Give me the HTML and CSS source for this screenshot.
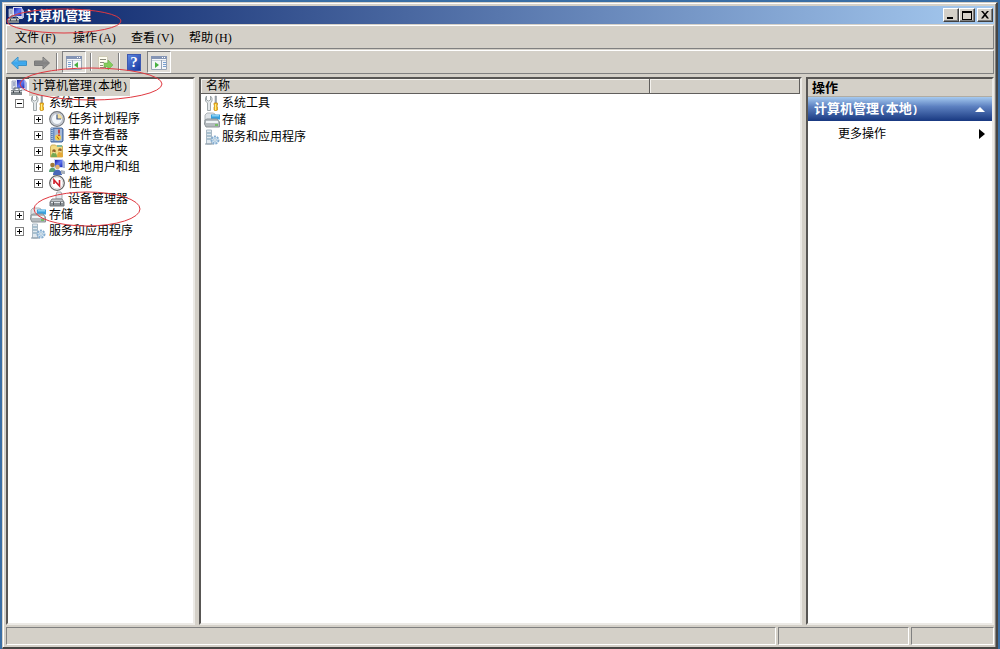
FILE: index.html
```html
<!DOCTYPE html>
<html lang="zh-CN">
<head>
<meta charset="utf-8">
<title>计算机管理</title>
<link rel="stylesheet" href="styles.css">
</head>
<body>
<svg class="defs" width="0" height="0" aria-hidden="true">
  <defs>
    <linearGradient id="g-blue" x1="0" y1="0" x2="0" y2="1"><stop offset="0" stop-color="#8cd4fa"/><stop offset="0.5" stop-color="#38a4ec"/><stop offset="1" stop-color="#60c0f4"/></linearGradient>
    <linearGradient id="g-gray" x1="0" y1="0" x2="0" y2="1"><stop offset="0" stop-color="#b0b0b0"/><stop offset="0.5" stop-color="#808080"/><stop offset="1" stop-color="#a0a0a0"/></linearGradient>
    <linearGradient id="g-screen" x1="0" y1="0" x2="1" y2="1"><stop offset="0" stop-color="#1018a0"/><stop offset="0.5" stop-color="#6078f0"/><stop offset="1" stop-color="#1828b8"/></linearGradient>
    <symbol id="i-computer" viewBox="0 0 16 16">
      <path d="M1 2h4v8H1z" fill="#d8dce8" stroke="#a0a8c0"/><path d="M2 4h2M2 6h2" stroke="#7080a8"/>
      <path d="M5 0h9v10H5z" fill="#d8dcf4"/><path d="M6 1h7.500v8H6z" fill="url(#g-screen)"/>
      <path d="M14 1l2 3v7h-2z" fill="#b0b8e0"/><path d="M10 10h4l1 2h-5z" fill="#d0d4e0"/>
      <path d="M0 11h11v5H0z" fill="#7c8488"/><path d="M3 11V9h5v2" fill="none" stroke="#606870"/>
      <path d="M0 12.500h11" stroke="#c8ccd0"/><path d="M2.500 12v2M8.500 12v2" stroke="#404850"/>
    </symbol>
    <symbol id="i-tools" viewBox="0 0 16 16">
      <path d="M2.500 1v4l2 1 2-1V1l1.500 2v3L6.500 8v7.500h-3V8L1.500 6V3z" fill="#e4e8ea" stroke="#8c9498" stroke-width=".8"/>
      <path d="M11 1h1.500v7H11z" fill="#a0a8b0" stroke="#808890" stroke-width=".5"/>
      <path d="M10 8h3.500v2l-.8 1 .8 1v3l-1 .7h-1.500l-1-.7v-3l.8-1-.8-1z" fill="#f8bc20" stroke="#c08818" stroke-width=".7"/><path d="M11.500 9v6" stroke="#fff080"/>
    </symbol>
    <symbol id="i-clock" viewBox="0 0 16 16">
      <circle cx="8" cy="8" r="7.300" fill="#d4d8de" stroke="#74787e" stroke-width="1.200"/><circle cx="8" cy="8" r="5.500" fill="#f4f8fc" stroke="#a0a8b4" stroke-width=".7"/>
      <path d="M8 8V2.700A5.300 5.300 0 0 1 13.300 8z" fill="#f4dfa0"/><path d="M8 3.500V8h4" fill="none" stroke="#405888" stroke-width="1.200"/>
    </symbol>
    <symbol id="i-event" viewBox="0 0 16 16">
      <path d="M2 1h11l1 1v12l-1 1H2z" fill="#6c90c4" stroke="#48689c"/><path d="M3 1v14" stroke="#b8d0e8" stroke-width="1.500" stroke-dasharray="1 1"/>
      <path d="M5.500 2H13v12H5.500z" fill="#a4b8d8"/><circle cx="9" cy="10.500" r="3" fill="#f4d050"/><path d="M8 9.500l2 3" stroke="#a06000"/>
      <path d="M10 2.500v4M10 7.500v1.500" stroke="#c82828" stroke-width="1.600"/>
    </symbol>
    <symbol id="i-share" viewBox="0 0 16 16">
      <path d="M1.500 4l1-2h4l1 1h6v11h-12z" fill="#f4dc84" stroke="#d0b058"/><path d="M8 2h5v2H8z" fill="#80b8a0"/>
      <circle cx="5" cy="8" r="1.800" fill="#906028"/><circle cx="11" cy="7" r="1.800" fill="#906028"/>
      <path d="M2 14c0-6 6-6 6 0z" fill="#74a854"/><path d="M8 14c0-7 6-7 6 0z" fill="#e4a838"/><path d="M4 9l2 1M10 8l2 1" stroke="#fff0c0"/>
    </symbol>
    <symbol id="i-users" viewBox="0 0 16 16">
      <path d="M5 0h9v9H5z" fill="#ccd4f0"/><path d="M6 1h7.500v7H6z" fill="url(#g-screen)"/><path d="M14 1l2 2v6h-2z" fill="#a8b4d8"/>
      <circle cx="3.500" cy="6" r="2.300" fill="#a07838"/><path d="M0 13c0-6 7-6 7 0z" fill="#58a078"/>
      <circle cx="8.500" cy="8" r="2.300" fill="#e0b070"/><path d="M4 16c0-7 9-7 9 0z" fill="#4868b8"/><path d="M12 11l4 1v3h-4z" fill="#a8b0b8"/>
    </symbol>
    <symbol id="i-perf" viewBox="0 0 16 16">
      <circle cx="8" cy="8" r="7.300" fill="#fff" stroke="#646464" stroke-width="1.300"/><circle cx="8" cy="8" r="5.800" fill="none" stroke="#d0d0d0" stroke-width=".7"/>
      <path d="M5 9V5l5.500 6V5" fill="none" stroke="#d01c28" stroke-width="1.600"/>
    </symbol>
    <symbol id="i-device" viewBox="0 0 16 16">
      <path d="M8 1h4l1 3v4H7V4z" fill="#e4e8ec" stroke="#a8acb0"/><path d="M3 8h10l2 3H1z" fill="#c4c8cc" stroke="#808488"/>
      <path d="M1 11h14v4H1z" fill="#8c9296" stroke="#70767a"/><path d="M2 11.500h12" stroke="#e0e4e8"/><path d="M4.500 11v3M11.500 11v3" stroke="#585c60"/>
    </symbol>
    <symbol id="i-storage" viewBox="0 0 16 16">
      <path d="M1 3l2-2h6l2 1v7H1z" fill="#e0e4e8" stroke="#b0b6ba"/><path d="M7 2.500h9v5H7z" fill="#38a0dc"/><path d="M8 3h7v1.500H8z" fill="#88d0f4"/>
      <path d="M1 8l2-1h10l2.500 3v5H2l-1.500-3z" fill="#b4babe" stroke="#8c9498"/><path d="M2 10h12" stroke="#f0f4f6" stroke-width="2"/><path d="M11 13h3" stroke="#60c048" stroke-width="1.500"/>
    </symbol>
    <symbol id="i-service" viewBox="0 0 16 16">
      <path d="M2.500 1h5v14h-5z" fill="#e0e8ee" stroke="#a8b8c4"/><path d="M3 4h4M3 7h4M3 10h4" stroke="#7098b0"/>
      <path d="M1 15h9" stroke="#8898a4"/><circle cx="11" cy="11" r="3.500" fill="#d4e6f2" stroke="#84acd0" stroke-width="2" stroke-dasharray="2 1"/><circle cx="11" cy="11" r="1.300" fill="#fff" stroke="#78a0c0" stroke-width=".6"/>
    </symbol>
    <symbol id="i-panel" viewBox="0 0 18 16">
      <path d="M1.500 1.500h15v13h-15z" fill="#f4f6f8" stroke="#98a4b4"/><path d="M1 1h16v3H1z" fill="#8494b4"/><path d="M12 2.500h4" stroke="#fff" stroke-dasharray="1 1"/>
      <path d="M2 5.500h14" stroke="#c8d0dc"/>
    </symbol>
    <symbol id="i-export" viewBox="0 0 16 16">
      <path d="M1.500 1.500h9v13h-9z" fill="#fffdf0" stroke="#d0ccb8"/><path d="M3 4.500h6M3 7.500h4M3 10.500h3M3 12.500h6" stroke="#8c8c7c"/>
      <path d="M7 8h4V5l5 5-5 5v-3H7z" fill="#84cc5c" stroke="#68b048" stroke-width=".6"/>
    </symbol>
  </defs>
</svg>

<div class="window">
  <header class="titlebar">
    <svg class="icon"><use href="#i-computer"/></svg>
    <h1 class="title">计算机管理</h1>
    <div class="controls">
      <button class="control" aria-label="最小化"><svg width="10" height="8"><path d="M1 6h6v2H1z"/></svg></button>
      <button class="control" aria-label="最大化"><svg width="10" height="9"><path d="M0 0h10v9H0zM1 2v6h8V2z" fill-rule="evenodd"/></svg></button>
      <button class="control control-close" aria-label="关闭"><svg width="8" height="8"><path d="M0 0h2l2 2.500L6 0h2L5 3.500 8 7.500H6L4 5 2 7.500H0l3-4z"/></svg></button>
    </div>
  </header>

  <nav class="menubar">
    <button class="menu">文件<span class="latin">(F)</span></button>
    <button class="menu">操作<span class="latin">(A)</span></button>
    <button class="menu">查看<span class="latin">(V)</span></button>
    <button class="menu">帮助<span class="latin">(H)</span></button>
  </nav>

  <div class="toolbar">
    <button class="tool" aria-label="后退"><svg class="icon arrow-back" viewBox="0 0 16 16"><path d="M.5 8L7 2v4h8.500v4.500H7V14z"/></svg></button>
    <button class="tool" aria-label="前进"><svg class="icon arrow-next" viewBox="0 0 16 16"><path d="M15.500 8L9 2v4H.5v4.500H9V14z"/></svg></button>
    <span class="separator"></span>
    <button class="tool pressed" aria-label="显示/隐藏控制台树"><svg width="18" height="16"><use href="#i-panel"/><path d="M7.500 5v9" stroke="#98a4b4"/><path d="M3 7.500h3M3 9.500h3M3 11.500h3" stroke="#78a0d0"/><path d="M13 7v6l-4-3z" fill="#48b040"/></svg></button>
    <span class="separator"></span>
    <button class="tool export" aria-label="导出列表"><svg class="icon"><use href="#i-export"/></svg></button>
    <span class="separator"></span>
    <button class="tool help" aria-label="帮助">?</button>
    <button class="tool pressed" aria-label="显示/隐藏操作窗格"><svg width="18" height="16"><use href="#i-panel"/><path d="M11.500 5v9" stroke="#98a4b4"/><path d="M13 7.500h3M13 9.500h3M13 11.500h3" stroke="#78a0d0"/><path d="M5 7v6l4-3z" fill="#48b040"/></svg></button>
  </div>

  <main class="panes">
    <section class="pane tree-pane">
      <ul class="tree">
        <li class="node root"><svg class="icon"><use href="#i-computer"/></svg><span class="label selected">计算机管理<span class="latin">(</span>本地<span class="latin">)</span></span></li>
        <li class="node level1"><button class="toggle open" aria-label="折叠"></button><svg class="icon"><use href="#i-tools"/></svg><span class="label">系统工具</span></li>
        <li class="node level2"><button class="toggle" aria-label="展开"></button><svg class="icon"><use href="#i-clock"/></svg><span class="label">任务计划程序</span></li>
        <li class="node level2"><button class="toggle" aria-label="展开"></button><svg class="icon"><use href="#i-event"/></svg><span class="label">事件查看器</span></li>
        <li class="node level2"><button class="toggle" aria-label="展开"></button><svg class="icon"><use href="#i-share"/></svg><span class="label">共享文件夹</span></li>
        <li class="node level2"><button class="toggle" aria-label="展开"></button><svg class="icon"><use href="#i-users"/></svg><span class="label">本地用户和组</span></li>
        <li class="node level2"><button class="toggle" aria-label="展开"></button><svg class="icon"><use href="#i-perf"/></svg><span class="label">性能</span></li>
        <li class="node level2"><span class="no-toggle"></span><svg class="icon"><use href="#i-device"/></svg><span class="label">设备管理器</span></li>
        <li class="node level1"><button class="toggle" aria-label="展开"></button><svg class="icon"><use href="#i-storage"/></svg><span class="label">存储</span></li>
        <li class="node level1"><button class="toggle" aria-label="展开"></button><svg class="icon"><use href="#i-service"/></svg><span class="label">服务和应用程序</span></li>
      </ul>
    </section>

    <section class="pane list-pane">
      <table class="list">
        <thead><tr><th class="col-name">名称</th><th></th></tr></thead>
        <tbody>
          <tr><td><div class="entry"><svg class="icon"><use href="#i-tools"/></svg>系统工具</div></td><td></td></tr>
          <tr><td><div class="entry"><svg class="icon"><use href="#i-storage"/></svg>存储</div></td><td></td></tr>
          <tr><td><div class="entry"><svg class="icon"><use href="#i-service"/></svg>服务和应用程序</div></td><td></td></tr>
        </tbody>
      </table>
    </section>

    <aside class="pane actions-pane">
      <h2 class="actions-title">操作</h2>
      <button class="actions-group"><span>计算机管理<span class="latin">(</span>本地<span class="latin">)</span></span><svg width="10" height="5"><path d="M0 5l5-5 5 5z" fill="#fff"/></svg></button>
      <button class="action">更多操作<svg width="6" height="10"><path d="M0 0l6 5-6 5z"/></svg></button>
    </aside>
  </main>

  <footer class="statusbar"><span class="status"></span><span class="status"></span><span class="status"></span></footer>

  <svg class="marks" width="170" height="232" aria-hidden="true">
    <ellipse cx="64" cy="21" rx="57" ry="12"/>
    <ellipse cx="91" cy="84" rx="71" ry="16"/>
    <ellipse cx="87" cy="209" rx="53" ry="17"/>
  </svg>
</div>
</body>
</html>
```

FILE: styles.css
```css
:root {
  --face: #d4d0c8;
  --shadow: #808080;
  --dark: #484644;
}

* { box-sizing: border-box; }

body {
  margin: 0;
  min-height: 100vh;
  display: flex;
  padding: 2px 2px 0;
  background: #3a6ea5;
  color: #000;
  font: 12px/16px "Liberation Sans", "Noto Sans CJK SC", sans-serif;
}

button {
  margin: 0;
  padding: 0;
  border: 0;
  background: none;
  color: inherit;
  font: inherit;
}

.defs { position: absolute; }
.icon { width: 16px; height: 16px; flex: none; }
.latin { font-family: "Liberation Mono", monospace; font-size: 10px; }

.window {
  flex: 1;
  display: flex;
  flex-direction: column;
  padding: 3px 2px 2px 3px;
  background: var(--face);
  border: 1px solid var(--face);
  border-right: 2px solid var(--dark);
  border-bottom: 2px solid var(--dark);
  box-shadow: inset 1px 1px #fff, inset -1px 0 var(--shadow);
}

.titlebar {
  display: flex;
  align-items: center;
  height: 18px;
  padding: 0 1px 0 2px;
  margin-bottom: 1px;
  background: linear-gradient(90deg, #0a246a, #a6caf0);
}

.title {
  flex: 1;
  margin: 0 0 0 2px;
  padding-top: 1px;
  color: #fff;
  font-size: 13px;
  line-height: 17px;
}

.controls { display: flex; }

.control {
  display: grid;
  place-items: center;
  width: 16px;
  height: 14px;
  background: var(--face);
  border: 1px solid;
  border-color: #fff #404040 #404040 #fff;
  box-shadow: inset -1px -1px var(--shadow);
}

.control-close { margin-left: 2px; }

.menubar,
.toolbar {
  display: flex;
  align-items: center;
  height: 24px;
  border: 1px solid;
  border-color: #fff var(--shadow) var(--shadow) #fff;
}

.menubar { padding: 2px 8px 0; margin-bottom: 1px; }
.menu { width: 58px; text-align: left; white-space: nowrap; }
.menu .latin { padding-left: 2px; font-family: "Liberation Serif", serif; font-size: 12px; }
.toolbar { gap: 3px; padding: 0 2px; margin-bottom: 3px; }

.tool {
  display: grid;
  place-items: center;
  width: 20px;
  height: 22px;
  padding-top: 1px;
}

.export { width: 18px; }

.pressed {
  width: 24px;
  background: #e2dfd9;
  border: 1px solid;
  border-color: var(--shadow) #fff #fff var(--shadow);
}

.arrow-back { fill: url(#g-blue); stroke: #3890c8; }
.arrow-next { fill: url(#g-gray); stroke: #787878; }

.help {
  width: 14px;
  height: 17px;
  margin: 0 3px;
  padding: 0;
  background: linear-gradient(135deg, #5c86e0, #1838a0);
  border: 1px solid #3c58b0;
  color: #fff;
  font: bold 15px/15px "Liberation Serif", serif;
}

.separator {
  width: 2px;
  height: 18px;
  margin: 0 1px;
  border-left: 1px solid var(--shadow);
  border-right: 1px solid #fff;
}

.panes {
  flex: 1;
  display: grid;
  grid-template-columns: 189px 1fr 188px;
  gap: 4px;
}

.pane {
  background: #fff;
  border: 2px solid;
  border-color: #585654 #eceae6 #eceae6 #585654;
  min-width: 0;
}

.tree {
  margin: 0;
  padding: 0 3px;
  list-style: none;
}

.node {
  display: flex;
  align-items: center;
  height: 16px;
  white-space: nowrap;
}

.label { padding: 0 2px 0 3px; }
.selected { background: var(--face); margin-left: 2px; }
.level1 { padding-left: 4px; }
.level2 { padding-left: 23px; }
.node .no-toggle { width: 9px; margin-right: 6px; }

.toggle {
  width: 9px;
  height: 9px;
  margin-right: 6px;
  flex: none;
  border: 1px solid var(--shadow);
  background:
    linear-gradient(#000, #000) center / 5px 1px no-repeat,
    linear-gradient(#000, #000) center / 1px 5px no-repeat;
}

.open { background: linear-gradient(#000, #000) center / 5px 1px no-repeat; }

.list {
  width: 100%;
  border-collapse: separate;
  border-spacing: 0;
  table-layout: fixed;
}

.list th {
  height: 15px;
  padding: 1px 5px 0;
  background: var(--face);
  border-right: 1px solid #605e5c;
  border-bottom: 1px solid #605e5c;
  box-shadow: inset 1px 1px #f4f2ee;
  font-weight: normal;
  line-height: 13px;
  text-align: left;
}

.list .col-name { width: 75%; }
.list td { padding: 0 3px; }

.entry {
  display: flex;
  align-items: center;
  gap: 2px;
  height: 17px;
}

.actions-pane { display: flex; flex-direction: column; }

.actions-title {
  margin: 0;
  padding-left: 4px;
  background: var(--face);
  border-bottom: 1px solid #b0aca4;
  font-size: 13px;
  line-height: 17px;
}

.actions-group,
.action {
  display: flex;
  align-items: center;
  justify-content: space-between;
  height: 24px;
  padding: 1px 7px 0 6px;
}

.actions-group {
  background: linear-gradient(#a6caf0, #5c80c0 40%, #183880);
  color: #fff;
  font-size: 13px;
  font-weight: bold;
}

.actions-group .latin { font-size: 11px; }
.action { padding-left: 30px; }

.statusbar {
  display: grid;
  grid-template-columns: 1fr 131px 83px;
  gap: 2px;
  height: 18px;
  margin-top: 2px;
}

.status {
  border: 1px solid;
  border-color: var(--shadow) #fff #fff var(--shadow);
}

.marks {
  position: absolute;
  left: 0;
  top: 0;
  fill: none;
  stroke: #e03840;
  pointer-events: none;
}
```
